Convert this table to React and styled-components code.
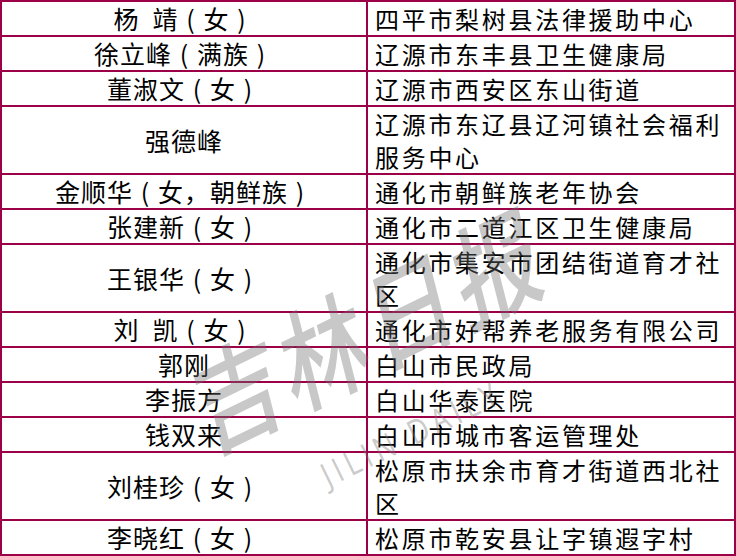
import styled, { createGlobalStyle } from 'styled-components'

const rows = [
  { name: '杨 靖', note: '女', org: ['四平市梨树县法律援助中心'] },
  { name: '徐立峰', note: '满族', org: ['辽源市东丰县卫生健康局'] },
  { name: '董淑文', note: '女', org: ['辽源市西安区东山街道'] },
  { name: '强德峰', org: ['辽源市东辽县辽河镇社会福利', '服务中心'] },
  { name: '金顺华', note: '女，朝鲜族', org: ['通化市朝鲜族老年协会'] },
  { name: '张建新', note: '女', org: ['通化市二道江区卫生健康局'] },
  { name: '王银华', note: '女', org: ['通化市集安市团结街道育才社', '区'] },
  { name: '刘 凯', note: '女', org: ['通化市好帮养老服务有限公司'] },
  { name: '郭刚', org: ['白山市民政局'] },
  { name: '李振方', org: ['白山华泰医院'] },
  { name: '钱双来', org: ['白山市城市客运管理处'] },
  { name: '刘桂珍', note: '女', org: ['松原市扶余市育才街道西北社', '区'] },
  { name: '李晓红', note: '女', org: ['松原市乾安县让字镇遐字村'] },
]

export default function App() {
  return (
    <>
      <Global />
      <Wrapper>
        <Table>
          <colgroup>
            <col style={{ width: 366 }} />
            <col style={{ width: 368 }} />
          </colgroup>
          <tbody>
            {rows.map((r, i) => (
              <tr key={`r` + i}>
                <NameCell>
                  {r.name.split(' ').map((part, j) => (
                    <span key={j}>
                      {j > 0 ? <Gap /> : null}
                      {part}
                    </span>
                  ))}
                  {r.note ? (
                    <>
                      <Paren>(</Paren>
                      {r.note}
                      <Paren>)</Paren>
                    </>
                  ) : null}
                </NameCell>
                <OrgCell>
                  {r.org.map((line, j) => (
                    <Line key={j}>{line}</Line>
                  ))}
                </OrgCell>
              </tr>
            ))}
          </tbody>
        </Table>
        <Watermark>
          <Mark>吉林日报</Mark>
          <MarkLatin>JILIN DAILY</MarkLatin>
        </Watermark>
      </Wrapper>
    </>
  )
}

const Global = createGlobalStyle`
body{
  margin:0;
  background:#fff;
}
`
const Wrapper = styled.div`
position:relative;
width:736px;
height:556px;
overflow:hidden;
background:#fff;
font-family:"Noto Sans CJK SC","Noto Sans",sans-serif;
color:#000;
`
const Table = styled.table`
border-collapse:collapse;
table-layout:fixed;
width:734px;
td{
  border:2px solid #9c0046;
  padding:0;
  line-height:33px;
  vertical-align:middle;
}
`
const NameCell = styled.td`
text-align:center;
font-size:25px;
letter-spacing:1px;
white-space:nowrap;
`
const OrgCell = styled.td`
text-align:left;
font-size:24px;
letter-spacing:2.7px;
padding-left:7px !important;
white-space:nowrap;
`
const Line = styled.div`
display:block;
`
const Gap = styled.span`
display:inline-block;
width:13px;
`
const Paren = styled.span`
display:inline-block;
width:25px;
text-align:center;
`
const Watermark = styled.div`
position:absolute;
left:140px;
top:283px;
width:440px;
display:flex;
flex-direction:column;
align-items:center;
transform:rotate(-26deg) scaleY(1.2);
transform-origin:50% 45px;
pointer-events:none;
`
const Mark = styled.div`
font-size:90px;
font-weight:500;
letter-spacing:6px;
line-height:90px;
height:90px;
color:rgba(110,110,110,0.38);
font-style:italic;
`
const MarkLatin = styled.div`
font-family:"Open Sans","Noto Sans",sans-serif;
font-size:28px;
letter-spacing:5px;
line-height:28px;
margin-top:38px;
color:rgba(120,120,120,0.4);
`
